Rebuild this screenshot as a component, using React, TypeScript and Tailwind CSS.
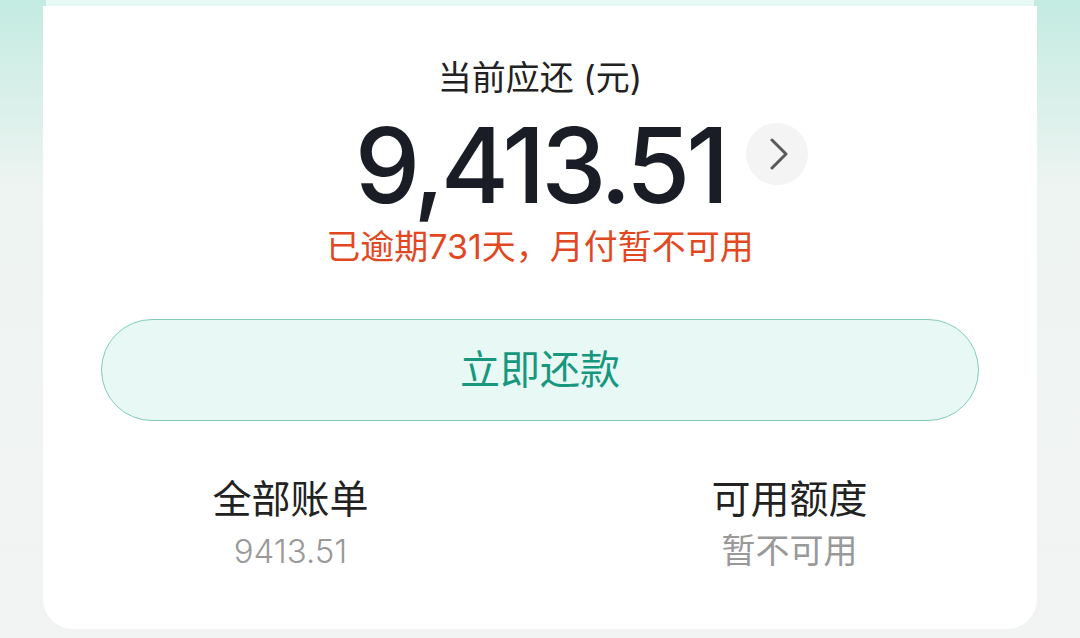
const CJK = "font-['Inter','Noto_Sans_CJK_SC',sans-serif]";

const App = () => {
  return (
    <div className={`w-[1080px] h-[638px] overflow-hidden bg-gradient-to-b from-[#c3ebe1] via-[#eef4f2] via-[30%] to-[#f2f3f3] ${CJK}`}>
      {/* Top strip of previous panel */}
      <div className="mx-[46px] h-[6px] bg-[#e6f9f5]" />

      <div className="mx-[43px] bg-white rounded-b-[30px] pt-[52px] pb-[58px] flex flex-col items-center">
        {/* Amount heading */}
        <p className="text-[34px] leading-[40px] text-[#222222]">当前应还 (元)</p>

        <div className="relative mt-[15px]">
          <span className="block font-['Inter',sans-serif] font-medium text-[104px] leading-none tracking-[-0.04em] text-[#1b1d26]">
            9,413.51
          </span>
          <button
            type="button"
            className="absolute left-[calc(100%+21px)] top-[10px] h-[62px] w-[62px] rounded-full bg-[#f4f4f5] flex items-center justify-center"
          >
            <svg className="h-[32px] w-[18px] ml-[4px]" viewBox="0 0 18 32" fill="none">
              <path d="M2 2l14 14L2 30" stroke="#58595b" strokeWidth={3} strokeLinecap="round" strokeLinejoin="round" />
            </svg>
          </button>
        </div>

        <p className="mt-[10px] text-[34px] leading-[40px] text-[#e2481f]">已逾期731天，月付暂不可用</p>

        {/* Repay button */}
        <button
          type="button"
          className="mt-[52px] w-[878px] h-[102px] rounded-full bg-[#e8f8f5] border-[1.5px] border-[#82cbbb] text-[40px] text-[#17977d] flex items-center justify-center"
        >
          立即还款
        </button>

        {/* Summary */}
        <div className="mt-[54px] flex justify-center gap-[299px]">
          <div className="w-[200px] flex flex-col items-center">
            <span className="text-[39px] leading-[48px] text-[#222222]">全部账单</span>
            <span className="mt-[8px] font-['Inter',sans-serif] font-light text-[33px] leading-[40px] text-[#999999]">9413.51</span>
          </div>
          <div className="w-[200px] flex flex-col items-center">
            <span className="text-[39px] leading-[48px] text-[#222222]">可用额度</span>
            <span className="mt-[8px] text-[34px] leading-[40px] text-[#999999]">暂不可用</span>
          </div>
        </div>
      </div>
    </div>
  );
};

export default App;
